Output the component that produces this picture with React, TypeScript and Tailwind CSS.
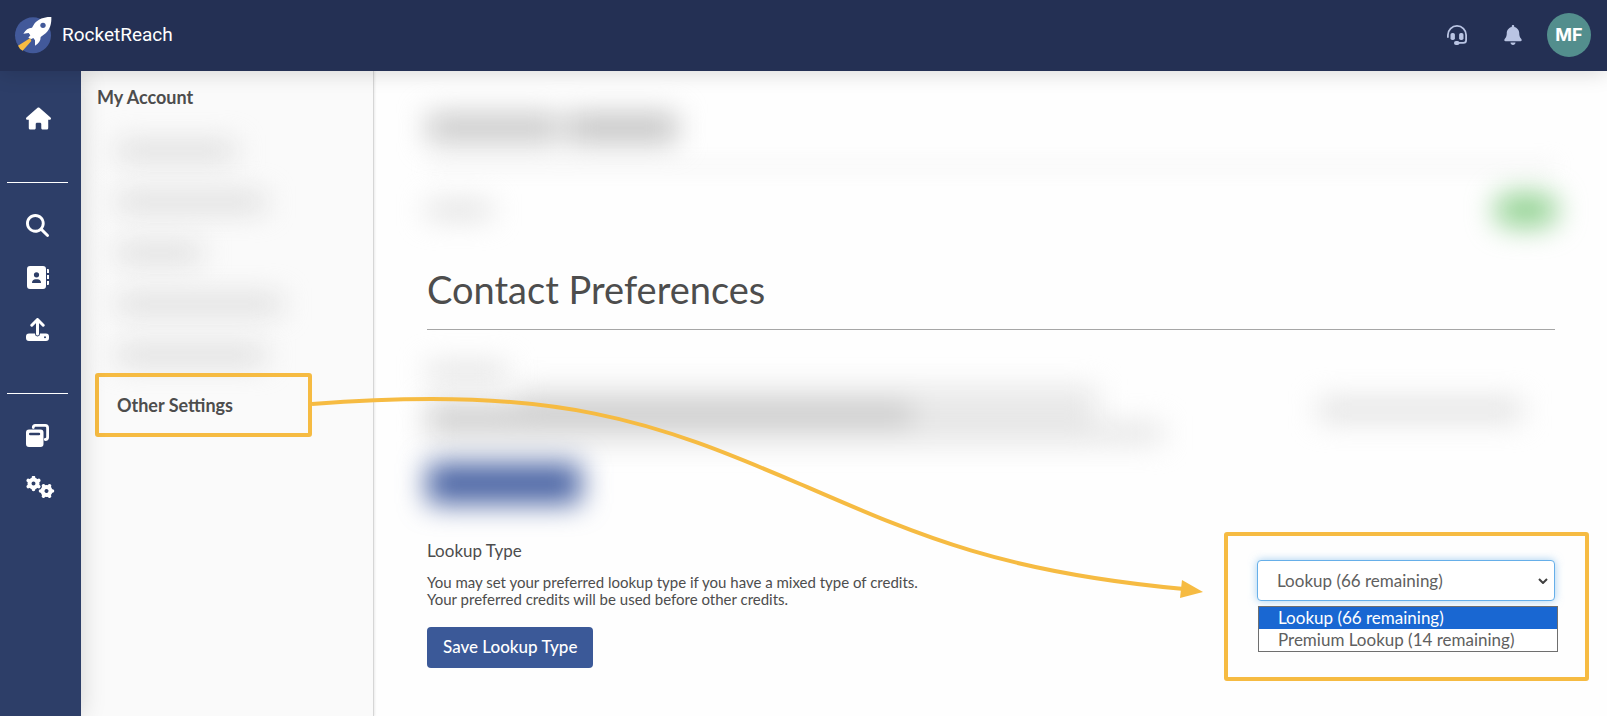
import type { ReactNode } from "react";
import { FaBell, FaHouse, FaMagnifyingGlass } from "react-icons/fa6";

const lookupOptions = ["Lookup (66 remaining)", "Premium Lookup (14 remaining)"];

function RocketLogo() {
  return (
    <svg viewBox="42 45 114 114" className="size-[38px]" aria-hidden="true">
      <circle cx="99" cy="103" r="54" fill="#42599a" />
      <path d="M91 111 L54 134 Q58 144 68 149 L94 120 Z" fill="#f8bc42" />
      <path d="M154 48 C134 47 116 53 103 68 L96 80 Q80 80 70 98 L86 96 L91 103 L85 110 L94 114 L100 111 L105 118 L105 134 Q122 124 122 108 L137 97 C150 85 155 68 154 48 Z" fill="#fff" />
      <circle cx="129" cy="73" r="8" fill="#42599a" />
    </svg>
  );
}

function HeadsetIcon() {
  return (
    <svg viewBox="0 0 20 20" className="size-[20px]" fill="none" aria-hidden="true">
      <path d="M.9 12V10a9.100 9.100 0 0 1 18.200 0v5.200q0 2.700-2.700 2.700H10" stroke="currentColor" strokeWidth="1.800" strokeLinecap="round" />
      <rect x="3.500" y="8" width="4.400" height="7" rx="1.800" fill="currentColor" />
      <rect x="12.100" y="8" width="4.400" height="7" rx="1.800" fill="currentColor" />
      <rect x="7" y="16" width="5.500" height="4" rx="2" fill="currentColor" />
    </svg>
  );
}

function ContactsIcon() {
  return (
    <svg viewBox="0 0 23 23" className="size-[23px]" fill="#fff" aria-hidden="true">
      <path fillRule="evenodd" d="M4 0h13a3 3 0 0 1 3 3v17a3 3 0 0 1-3 3H4a3 3 0 0 1-3-3V3a3 3 0 0 1 3-3Zm6.500 6.200a2.600 2.600 0 1 0 0 5.200 2.600 2.600 0 0 0 0-5.200ZM6 17h9c0-2.400-1.500-3.700-3.500-3.700h-2C7.500 13.300 6 14.600 6 17Z" />
      <path d="M21 3h1q1 0 1 1v3h-2ZM21 9h2v4h-2ZM21 15h2v3q0 1-1 1h-1Z" />
    </svg>
  );
}

function UploadIcon() {
  return (
    <svg viewBox="0 0 23 23" className="size-[23px]" aria-hidden="true">
      <path fillRule="evenodd" fill="#fff" d="M3 15.500h6v.5a2.500 2.500 0 0 0 5 0v-.5h6a3 3 0 0 1 3 3V20a3 3 0 0 1-3 3H3a3 3 0 0 1-3-3v-1.500a3 3 0 0 1 3-3Zm16 2.700a1 1 0 1 0 0 2 1 1 0 0 0 0-2Z" />
      <path d="M11.500 16V2M5.800 7.200l5.700-5.700 5.700 5.700" fill="none" stroke="#fff" strokeWidth="3" strokeLinecap="round" strokeLinejoin="round" />
    </svg>
  );
}

function WindowsIcon() {
  return (
    <svg viewBox="0 0 23 23" className="size-[23px]" aria-hidden="true">
      <path d="M7.300 3.500v-.2q0-1.900 1.900-1.900h10q2.400 0 2.400 2.400v9.500q0 2.200-2.300 2.200" fill="none" stroke="#fff" strokeWidth="2.800" strokeLinecap="round" />
      <path fillRule="evenodd" fill="#fff" d="M3 5.500h11.500a3 3 0 0 1 3 3V20a3 3 0 0 1-3 3H3a3 3 0 0 1-3-3V8.500a3 3 0 0 1 3-3Zm1.200 3.300a1.200 1.200 0 0 0 0 2.400h8.800a1.200 1.200 0 0 0 0-2.400Z" />
    </svg>
  );
}

function Gear({ cx, cy, turn }: { cx: number; cy: number; turn: number }) {
  return (
    <g transform={`translate(${cx} ${cy}) rotate(${turn})`}>
      <circle r="4" fill="none" stroke="#fff" strokeWidth="4" />
      {[0, 60, 120].map((angle) => (
        <path key={angle} transform={`rotate(${angle})`} d="M0-6V-5.500M0 6V5.500" stroke="#fff" strokeWidth="3.600" strokeLinecap="round" />
      ))}
    </g>
  );
}

function GearsIcon() {
  return (
    <svg viewBox="0 0 29 23" className="h-[23px] w-[29px]" aria-hidden="true">
      <Gear cx={7.5} cy={7.5} turn={0} />
      <Gear cx={20.5} cy={15} turn={30} />
    </svg>
  );
}

function RailLink({ label, children }: { label: string; children: ReactNode }) {
  return (
    <a href="#" aria-label={label} className="flex h-[52px] items-center pl-[26px] text-white">
      {children}
    </a>
  );
}

function Header() {
  return (
    <header className="relative z-20 flex h-[71px] items-center justify-between bg-[#243054] pr-4 pb-[2px] pl-[14px] shadow-[0_2px_20px_rgba(0,0,0,0.15)]">
      <a href="#" className="flex items-center gap-[10px]">
        <RocketLogo />
        <span className="pt-[2px] font-[Roboto,sans-serif] text-[19px] text-white">RocketReach</span>
      </a>
      <div className="flex items-center text-[#b9c4e3]">
        <button aria-label="Support" className="mr-[36px]">
          <HeadsetIcon />
        </button>
        <button aria-label="Notifications" className="mr-[24px]">
          <FaBell size={20} />
        </button>
        <button className="size-[44px] rounded-full bg-[#538e8d] font-[Inter,sans-serif] text-[18px] font-bold text-white">MF</button>
      </div>
    </header>
  );
}

function Rail() {
  return (
    <nav aria-label="Main" className="z-10 w-[81px] shrink-0 bg-[#2d3e68] pt-[21px] shadow-[0_0_24px_rgba(0,0,0,0.16)]">
      <RailLink label="Home">
        <FaHouse size={25} />
      </RailLink>
      <hr className="mt-[38px] mr-[13px] mb-[16px] ml-[7px] border-white" />
      <RailLink label="Search">
        <FaMagnifyingGlass size={23} />
      </RailLink>
      <RailLink label="Contacts">
        <ContactsIcon />
      </RailLink>
      <RailLink label="Upload">
        <UploadIcon />
      </RailLink>
      <hr className="mt-[38px] mr-[13px] mb-[15px] ml-[7px] border-white" />
      <RailLink label="Integrations">
        <WindowsIcon />
      </RailLink>
      <RailLink label="Settings">
        <GearsIcon />
      </RailLink>
    </nav>
  );
}

function AccountMenu() {
  return (
    <aside className="w-[293px] shrink-0 border-r border-[#d6d6d6] bg-[#fafafa] shadow-[1px_0_2px_rgba(0,0,0,0.08)]">
      <h2 className="mb-[2px] flex h-[52px] items-center pl-4 text-[18px] font-bold">My Account</h2>
      <ul className="pl-[36px]">
        <li className="flex h-[51px] items-center">
          <div className="h-4 w-[118px] bg-[#d6d6d6] blur-[14px]" />
        </li>
        <li className="flex h-[51px] items-center">
          <div className="h-4 w-[148px] bg-[#d6d6d6] blur-[14px]" />
        </li>
        <li className="flex h-[51px] items-center">
          <div className="h-4 w-[84px] bg-[#d6d6d6] blur-[14px]" />
        </li>
        <li className="flex h-[51px] items-center">
          <div className="h-4 w-[164px] bg-[#d6d6d6] blur-[14px]" />
        </li>
        <li className="flex h-[51px] items-center">
          <div className="h-4 w-[148px] bg-[#d6d6d6] blur-[14px]" />
        </li>
        <li className="relative flex h-[51px] items-center">
          <a href="#" className="text-[18px] font-bold">Other Settings</a>
          <div className="pointer-events-none absolute -top-[7px] -bottom-[6px] -left-[22px] w-[217px] rounded-[3px] border-4 border-[#f6bb42]" />
        </li>
      </ul>
    </aside>
  );
}

function LookupSelect() {
  return (
    <div className="-mr-[34px] h-[149px] w-[365px] shrink-0 rounded-[3px] border-4 border-[#f6bb42] pt-[24px] pr-[30px] pl-[29px]">
      <div className="relative">
        <select
          aria-label="Lookup type"
          className="h-[41px] w-full appearance-none rounded-[4px] border border-[#66afe9] bg-white pl-[19px] text-[17px] text-[#606060] shadow-[0_0_8px_rgba(102,175,233,0.6)] outline-none"
        >
          {lookupOptions.map((option) => (
            <option key={option}>{option}</option>
          ))}
        </select>
        <svg viewBox="0 0 10 6" className="pointer-events-none absolute top-[18px] right-[7px] h-[6px] w-[10px]" fill="none" stroke="#404040" strokeWidth="2">
          <path d="M1 1l4 4 4-4" />
        </svg>
        <ul role="listbox" aria-label="Lookup type options" className="absolute top-[46px] -right-[3px] left-px border border-[#6f6f6f] bg-white text-[17px] leading-[22px] text-[#606060]">
          <li role="option" aria-selected="true" className="bg-[#1967d2] pl-[19px] text-white">{lookupOptions[0]}</li>
          <li role="option" aria-selected="false" className="pl-[19px]">{lookupOptions[1]}</li>
        </ul>
      </div>
    </div>
  );
}

function Settings() {
  return (
    <main className="min-w-0 flex-1 pr-[52px] pb-[33px] pl-[53px]">
      <div className="mt-[42px] flex h-[30px] gap-2 blur-[14px]">
        <div className="w-[132px] bg-[#cacaca]" />
        <div className="w-[110px] bg-[#c4c4c4]" />
      </div>
      <div className="mt-[22px] h-[3px] bg-[#e2e2e2] blur-[10px]" />
      <div className="mt-[22px] flex h-[40px] items-center justify-between">
        <div className="h-4 w-[64px] bg-[#dcdcdc] blur-[14px]" />
        <div className="-mr-[3px] h-[34px] w-[64px] rounded-full bg-[#92d292] blur-[14px]" />
      </div>

      <h1 className="mt-[34px] text-[38px] leading-[50px]">Contact Preferences</h1>
      <hr className="mt-[15px] border-[#a6a6a6]" />

      <div className="mt-[34px] flex items-start justify-between">
        <div>
          <div className="h-4 w-[80px] bg-[#dedede] blur-[14px]" />
          <div className="mt-2 blur-[14px]">
            <div className="ml-[90px] h-[16px] w-[580px] bg-[#e4e4e4]" />
            <div className="flex h-[20px]">
              <div className="w-[485px] bg-[#cacaca]" />
              <div className="w-[185px] bg-[#ececec]" />
            </div>
            <div className="h-[18px] w-[735px] bg-[#e2e2e2]" />
          </div>
          <div className="mt-[21px] h-[41px] w-[154px] rounded-[4px] bg-[#4a64a4] blur-[14px]" />
        </div>
        <div className="mt-[36px] mr-[34px] h-[20px] w-[202px] bg-[#dfdfdf] blur-[14px]" />
      </div>

      <div className="mt-[28px] flex items-start justify-between">
        <div className="pt-[8px]">
          <h3 className="text-[17px] leading-[22px]">Lookup Type</h3>
          <p className="mt-[12px] text-[15px] leading-[17px]">
            You may set your preferred lookup type if you have a mixed type of credits.
            <br />
            Your preferred credits will be used before other credits.
          </p>
          <button className="mt-[19px] h-[41px] rounded-[4px] bg-[#3b5998] px-4 pb-[2px] text-[17px] font-medium text-white">Save Lookup Type</button>
        </div>
        <LookupSelect />
      </div>
    </main>
  );
}

function ArrowOverlay() {
  return (
    <svg className="pointer-events-none absolute top-0 left-0 z-30" width="1220" height="620" viewBox="0 0 1220 620" fill="none" aria-hidden="true">
      <path d="M312 404C560 385 655 422 800 484C920 536 1000 572 1184 589" stroke="#f6bb42" strokeWidth="4" />
      <path d="M1182 580L1203 592L1180 598Z" fill="#f6bb42" />
    </svg>
  );
}

export default function App() {
  return (
    <div className="relative flex min-h-screen flex-col overflow-hidden bg-[#fefefe] font-[Lato,sans-serif] text-[#4d4d4d]">
      <Header />
      <div className="flex flex-1">
        <Rail />
        <AccountMenu />
        <Settings />
      </div>
      <ArrowOverlay />
    </div>
  );
}
